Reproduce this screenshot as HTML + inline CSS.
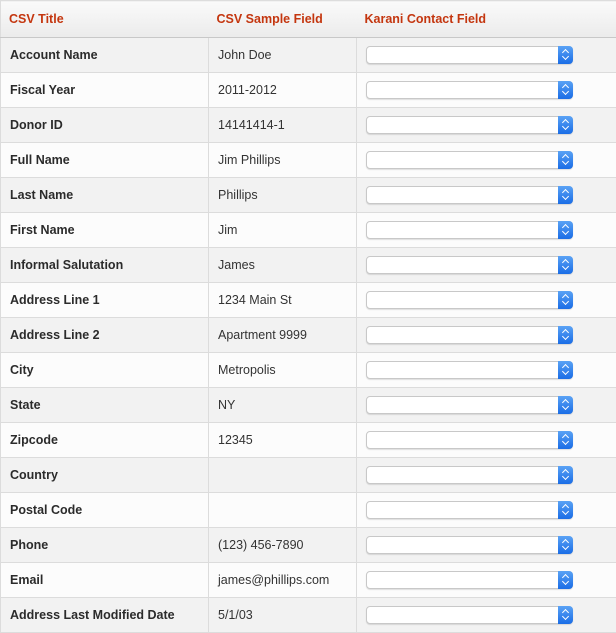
<!DOCTYPE html>
<html><head><style>
*{margin:0;padding:0;box-sizing:border-box}
body{width:616px;height:633px;background:#fff;font-family:"Liberation Sans",sans-serif;font-size:12.5px;color:#333;overflow:hidden}
table{border-collapse:collapse;width:616px;table-layout:fixed}
th{height:37px;text-align:left;color:#c4360f;font-weight:bold;font-size:12.5px;padding-left:8px;background:linear-gradient(#fafafa,#ebebeb);border-top:1px solid #ddd;border-bottom:1px solid #c8c8c8}
th:first-child{border-left:1px solid #ddd}th:last-child{border-right:1px solid #ddd}
td{height:35px;border:1px solid #dcdcdc;padding-left:9px;vertical-align:middle}
tr:nth-child(odd) td{background:#f2f2f2}
tr:nth-child(even) td{background:#fcfcfc}
td.t{font-weight:bold;color:#2b2b2b}
.s{position:relative;width:207px;height:18px;margin-left:0;background:#fff;border:1px solid #c8c8c8;border-radius:4px;box-shadow:0 1px 1px rgba(0,0,0,.12)}
.s b{position:absolute;right:-1px;top:-1px;width:15px;height:18px;background:linear-gradient(#5aa2f5,#1a6de6);border-radius:0 4px 4px 0}
.s b:before{content:"";position:absolute;left:5px;top:4px;width:4px;height:4px;border-left:1.3px solid #fff;border-top:1.3px solid #fff;transform:rotate(45deg)}
.s b:after{content:"";position:absolute;left:5px;top:8px;width:4px;height:4px;border-right:1.3px solid #fff;border-bottom:1.3px solid #fff;transform:rotate(45deg)}
</style></head><body>
<table>
<colgroup><col style="width:208px"><col style="width:148px"><col style="width:260px"></colgroup>
<thead><tr><th>CSV Title</th><th>CSV Sample Field</th><th>Karani Contact Field</th></tr></thead>
<tbody>
<tr><td class="t">Account Name</td><td>John Doe</td><td><div class="s"><b></b></div></td></tr>
<tr><td class="t">Fiscal Year</td><td>2011-2012</td><td><div class="s"><b></b></div></td></tr>
<tr><td class="t">Donor ID</td><td>14141414-1</td><td><div class="s"><b></b></div></td></tr>
<tr><td class="t">Full Name</td><td>Jim Phillips</td><td><div class="s"><b></b></div></td></tr>
<tr><td class="t">Last Name</td><td>Phillips</td><td><div class="s"><b></b></div></td></tr>
<tr><td class="t">First Name</td><td>Jim</td><td><div class="s"><b></b></div></td></tr>
<tr><td class="t">Informal Salutation</td><td>James</td><td><div class="s"><b></b></div></td></tr>
<tr><td class="t">Address Line 1</td><td>1234 Main St</td><td><div class="s"><b></b></div></td></tr>
<tr><td class="t">Address Line 2</td><td>Apartment 9999</td><td><div class="s"><b></b></div></td></tr>
<tr><td class="t">City</td><td>Metropolis</td><td><div class="s"><b></b></div></td></tr>
<tr><td class="t">State</td><td>NY</td><td><div class="s"><b></b></div></td></tr>
<tr><td class="t">Zipcode</td><td>12345</td><td><div class="s"><b></b></div></td></tr>
<tr><td class="t">Country</td><td></td><td><div class="s"><b></b></div></td></tr>
<tr><td class="t">Postal Code</td><td></td><td><div class="s"><b></b></div></td></tr>
<tr><td class="t">Phone</td><td>(123) 456-7890</td><td><div class="s"><b></b></div></td></tr>
<tr><td class="t">Email</td><td>james@phillips.com</td><td><div class="s"><b></b></div></td></tr>
<tr><td class="t">Address Last Modified Date</td><td>5/1/03</td><td><div class="s"><b></b></div></td></tr>
</tbody></table>
</body></html>
